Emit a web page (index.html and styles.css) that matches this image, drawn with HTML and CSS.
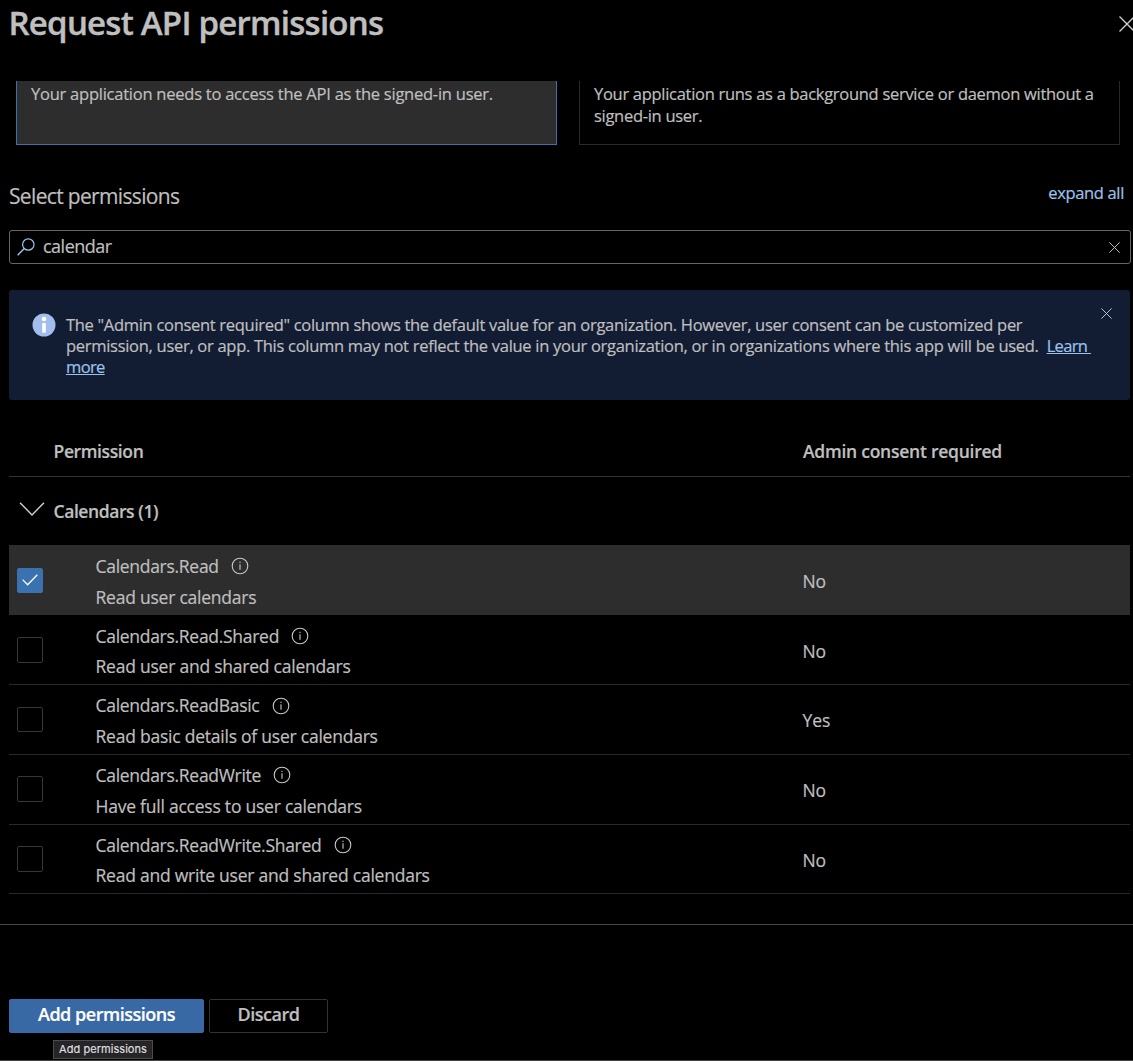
FILE: index.html
```html
<!DOCTYPE html>
<html lang="en">
<head>
<meta charset="utf-8">
<title>Request API permissions</title>
<link rel="stylesheet" href="styles.css">
</head>
<body>
<svg class="defs" width="0" height="0">
  <symbol id="close" viewBox="0 0 16 16"><path d="M.5.5l15 15M15.5.5l-15 15" fill="none" stroke="currentColor" stroke-width="1.3"/></symbol>
  <symbol id="info" viewBox="0 0 18 18"><circle cx="9" cy="9" r="7.8" fill="none" stroke="currentColor" stroke-width="1.1"/><path d="M9 7.3v5.4M9 4.8v1.3" stroke="currentColor" stroke-width="1.1"/></symbol>
</svg>
<div class="panel">
  <header class="head">
    <h1 class="title">Request API permissions</h1>
    <svg class="head-close"><use href="#close"/></svg>
  </header>
  <main class="content">
    <div class="cards">
      <div class="card card-selected">Your application needs to access the API as the signed-in user.</div>
      <div class="card">Your application runs as a background service or daemon without a<br>signed-in user.</div>
    </div>
    <div class="section-head">
      <h2 class="section-title">Select permissions</h2>
      <a class="expand">expand all</a>
    </div>
    <div class="search">
      <svg class="search-icon" viewBox="0 0 18 18"><circle cx="11.3" cy="6.5" r="5.7" fill="none" stroke="currentColor" stroke-width="1.2"/><path d="M7.3 10.6L.6 17.3" stroke="currentColor" stroke-width="1.4"/></svg>
      <span class="query">calendar</span>
      <svg class="search-clear"><use href="#close"/></svg>
    </div>
    <div class="notice">
      <svg class="notice-icon" viewBox="0 0 24 24"><circle cx="12" cy="12" r="11.5" fill="#a3bdec"/><circle cx="12" cy="6" r="2.3" fill="#fff"/><path d="M12 10v9.6" stroke="#fff" stroke-width="3.6"/></svg>
      <p class="notice-text">The "Admin consent required" column shows the default value for an organization. However, user consent can be customized per<br><span class="line-wide">permission, user, or app. This column may not reflect the value in your organization, or in organizations where this app will be used.</span>&nbsp; <a class="link">Learn&nbsp;</a><br><a class="link">more</a></p>
      <svg class="notice-close"><use href="#close"/></svg>
    </div>
    <div class="table">
      <div class="table-head"><span class="h-permission">Permission</span><span class="h-consent">Admin consent required</span></div>
      <div class="group">
        <svg class="chevron" viewBox="0 0 26 14"><path d="M1 .7l12 12.2L25 .7" fill="none" stroke="currentColor" stroke-width="1.4"/></svg>
        <span class="group-name">Calendars (1)</span>
      </div>
      <div class="row row-selected">
        <span class="box box-on"><svg class="check" viewBox="0 0 16 12"><path d="M.6 5.6l5 5.2L15.3.8" fill="none" stroke="#fff" stroke-width="1.3"/></svg></span>
        <div class="perm"><div class="name"><span>Calendars.Read</span><svg class="info"><use href="#info"/></svg></div><div class="desc">Read user calendars</div></div>
        <span class="consent">No</span>
      </div>
      <div class="row">
        <span class="box"></span>
        <div class="perm"><div class="name"><span>Calendars.Read.Shared</span><svg class="info"><use href="#info"/></svg></div><div class="desc">Read user and shared calendars</div></div>
        <span class="consent">No</span>
      </div>
      <div class="row">
        <span class="box"></span>
        <div class="perm"><div class="name"><span>Calendars.ReadBasic</span><svg class="info"><use href="#info"/></svg></div><div class="desc">Read basic details of user calendars</div></div>
        <span class="consent">Yes</span>
      </div>
      <div class="row">
        <span class="box"></span>
        <div class="perm"><div class="name"><span>Calendars.ReadWrite</span><svg class="info"><use href="#info"/></svg></div><div class="desc">Have full access to user calendars</div></div>
        <span class="consent">No</span>
      </div>
      <div class="row">
        <span class="box"></span>
        <div class="perm"><div class="name"><span>Calendars.ReadWrite.Shared</span><svg class="info"><use href="#info"/></svg></div><div class="desc">Read and write user and shared calendars</div></div>
        <span class="consent">No</span>
      </div>
    </div>
  </main>
  <footer class="footer">
    <div class="button primary">Add permissions<span class="tooltip">Add permissions</span></div>
    <div class="button secondary">Discard</div>
  </footer>
</div>
</body>
</html>
```
FILE: styles.css
```css
* { box-sizing: border-box; }
body { margin: 0; background: #000; color: #bfbfbf; font-family: "Segoe UI", "Open Sans", "Noto Sans", sans-serif; font-size: 16.5px; overflow: hidden; -webkit-text-stroke: 0.2px; }
svg { display: block; flex: none; }
.defs { position: absolute; }
.panel { height: 1061px; display: flex; flex-direction: column; border-bottom: 1px solid #444; overflow: hidden; white-space: nowrap; }
.head { height: 81px; flex: none; display: flex; justify-content: space-between; padding-left: 8.5px; }
.title { margin: 0; font-size: 33px; font-weight: 600; line-height: 46px; letter-spacing: -0.75px; -webkit-text-stroke: 0.4px; }
.head-close { width: 16px; height: 16px; margin: 16px -2px 0 0; color: #d0d0d0; }
.content { height: 843px; flex: none; padding: 0 3px 0 9px; }
.cards { display: flex; gap: 22px; padding: 0 10px 0 7px; }
.card { flex: 1; height: 64px; border: 1px solid #292929; border-top: 0; padding: 2px 14px; line-height: 22px; letter-spacing: -0.29px; }
.card-selected { background: #2d2d2d; border-color: #3a72b0; letter-spacing: -0.24px; }
.section-head { height: 85px; display: flex; justify-content: space-between; padding: 37px 6px 0 0; }
.section-title { margin: 0; font-size: 21px; font-weight: 400; line-height: 29px; letter-spacing: -0.66px; }
.expand { color: #9ac3ea; line-height: 22px; letter-spacing: -0.34px; }
.search { height: 34px; width: 1122px; border: 1px solid #666; border-radius: 3px; display: flex; align-items: center; padding: 0 10px 0 7px; }
.search-icon { width: 18px; height: 18px; color: #9ac3ea; }
.query { flex: 1; margin: -2px 0 0 8px; font-size: 18px; letter-spacing: -0.5px; line-height: 30px; }
.search-clear { width: 11px; height: 11px; color: #d0d0d0; }
.notice { height: 110px; margin-top: 26px; background: #121d34; border-radius: 3px; display: flex; padding: 0 18px 0 22px; }
.notice-icon { width: 24px; height: 24px; margin: 23px 0 0 0.5px; }
.notice-text { margin: 24px 0 0 10.5px; line-height: 21px; flex: 1; letter-spacing: -0.3px; }
.line-wide { letter-spacing: -0.29px; }
.link { color: #9ac3ea; text-decoration: underline; letter-spacing: -0.65px; }
.notice-close { width: 11px; height: 11px; margin-top: 18px; color: #d0d0d0; }
.table { font-size: 17.5px; border-bottom: 1px solid #292929; }
.table-head { height: 77px; border-bottom: 1px solid #333; padding: 39px 0 0 44.5px; display: grid; grid-template-columns: 749.5px 1fr; font-weight: 600; line-height: 24px; }
.h-permission { letter-spacing: -0.38px; }
.h-consent { letter-spacing: -0.25px; }
.group { height: 68px; display: flex; align-items: center; padding-left: 10px; font-weight: 600; }
.chevron { width: 26px; height: 14px; margin-top: -4px; color: #d0d0d0; }
.group-name { margin-left: 8.5px; letter-spacing: -0.42px; }
.row { height: 69.67px; border-top: 1px solid #292929; display: grid; grid-template-columns: 86.5px 707px 1fr; }
.row-selected { background: #2d2d2d; border-top-color: #2d2d2d; }
.row-selected + .row { border-top-color: transparent; }
.box { width: 26px; height: 25.5px; margin: 21.5px 0 0 8px; border: 1px solid #363636; border-radius: 2px; display: flex; align-items: center; justify-content: center; }
.box-on { background: #3a72b0; border-color: #3a72b0; }
.check { width: 16px; height: 12px; }
.perm { padding-top: 5px; line-height: 30.8px; letter-spacing: -0.29px; }
.desc { letter-spacing: -0.23px; }
.name { display: flex; align-items: center; }
.info { width: 18px; height: 18px; margin-left: 12.3px; color: #c8c8c8; }
.consent { line-height: 71px; letter-spacing: -0.1px; }
.footer { flex: 1; border-top: 1px solid #444; padding: 74px 0 0 9px; display: flex; gap: 5px; }
.button { position: relative; height: 34px; border: 1px solid #333; border-radius: 2px; font-size: 18px; font-weight: 600; line-height: 28.5px; text-align: center; letter-spacing: -0.48px; }
.primary { width: 195px; background: #3869a4; border-color: #3869a4; color: #fff; }
.secondary { width: 119px; }
.tooltip { position: absolute; left: 43px; top: 40px; width: 100px; height: 19px; border: 1px solid #4c4c4e; background: #252528; color: #dedede; font: 11px/16px Inter, sans-serif; letter-spacing: 0.05px; }
```
